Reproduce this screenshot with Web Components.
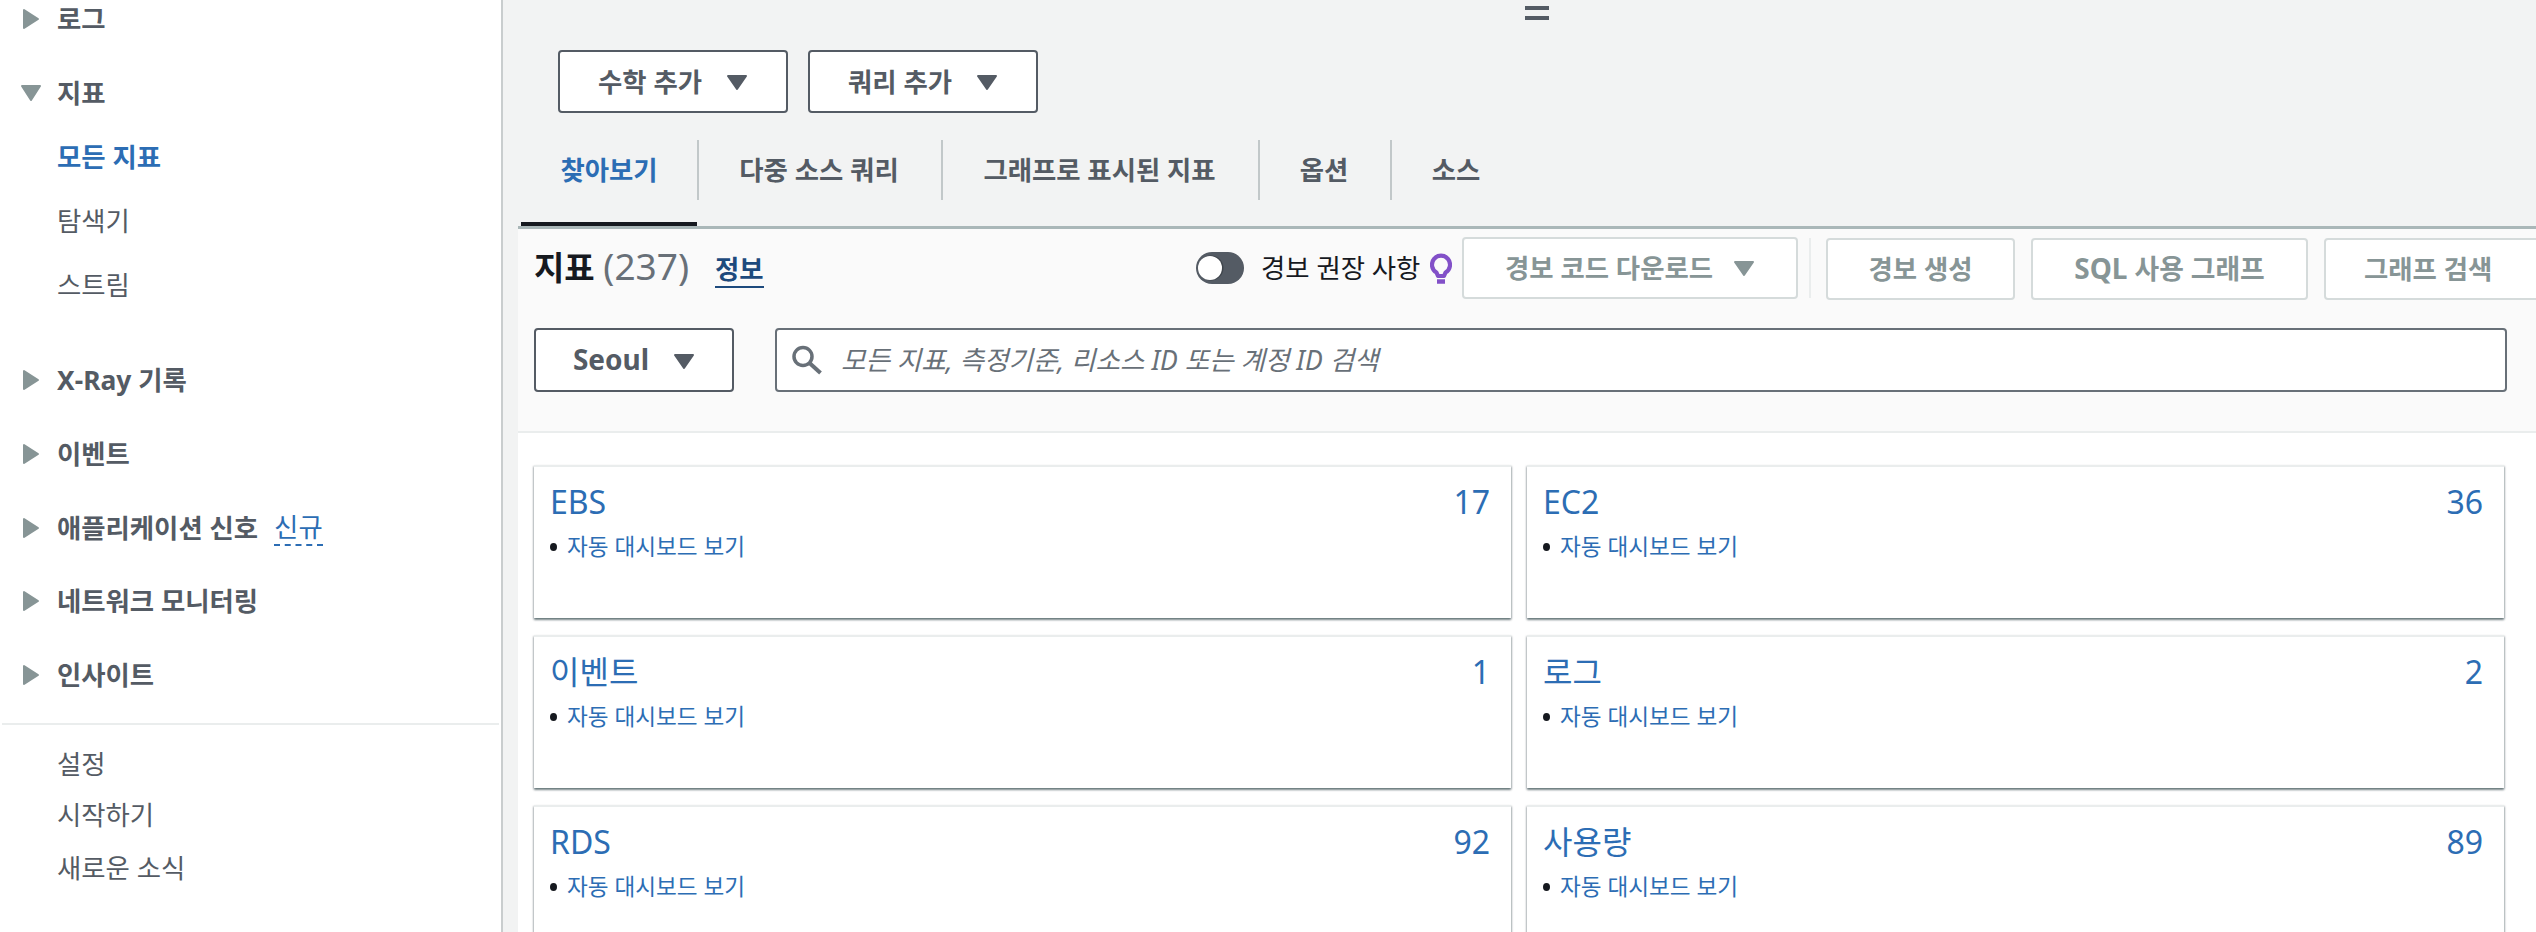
<!DOCTYPE html>
<html lang="ko">
<head>
<meta charset="UTF-8">
<title>CloudWatch 지표</title>
<style>
  html, body { margin: 0; height: 932px; overflow: hidden; }
  body {
    font-family: "Noto Sans", "Noto Sans CJK KR", sans-serif;
    color: #16191f;
    background: #f2f3f3;
  }
  #page { display: flex; height: 932px; width: 2536px; overflow: hidden; }
</style>
</head>
<body>
<div id="page">
  <side-nav>
    <nav-group style="--top:2px">로그</nav-group>
    <nav-group open style="--top:40px">지표</nav-group>
    <nav-link active style="--top:30px">모든 지표</nav-link>
    <nav-link style="--top:30px">탐색기</nav-link>
    <nav-link style="--top:30px">스트림</nav-link>
    <nav-group style="--top:61px">X-Ray 기록</nav-group>
    <nav-group style="--top:40px">이벤트</nav-group>
    <nav-group style="--top:40px" badge="신규">애플리케이션 신호</nav-group>
    <nav-group style="--top:39px">네트워크 모니터링</nav-group>
    <nav-group style="--top:40px">인사이트</nav-group>
    <nav-rule></nav-rule>
    <nav-link style="--top:0px">설정</nav-link>
    <nav-link style="--top:17px">시작하기</nav-link>
    <nav-link style="--top:19px">새로운 소식</nav-link>
  </side-nav>
  <metrics-view>
    <split-handle></split-handle>
    <div slot="actions" style="display:flex;gap:20px">
      <drop-button>수학 추가</drop-button>
      <drop-button>쿼리 추가</drop-button>
    </div>
    <tab-bar slot="tabs"></tab-bar>
    <metrics-panel slot="panel"></metrics-panel>
  </metrics-view>
</div>

<script>
  const CARET = '<svg width="22" height="17" viewBox="0 0 22 17"><path d="M2 2h18L11 15z" fill="currentColor" stroke="currentColor" stroke-width="2" stroke-linejoin="round"/></svg>'

  class SideNav extends HTMLElement {
    constructor() {
      super()
      const shadow = this.attachShadow({mode: 'open'})
      shadow.innerHTML = `
        <style>
          :host { display: block; box-sizing: border-box; width: 503px; height: 932px; flex: none;
            background: #fff; border-right: 2px solid #c9cdce; font-size: 26.4px; color: #545b64; }
        </style>
        <slot></slot>`
    }
  }

  class NavGroup extends HTMLElement {
    constructor() {
      super()
      const shadow = this.attachShadow({mode: 'open'})
      const open = this.hasAttribute('open')
      const badge = this.getAttribute('badge')
      const icon = open
        ? '<svg style="margin-left:-2px" width="22" height="18" viewBox="0 0 22 18"><path d="M2 2h18L11 16z" fill="#879596" stroke="#879596" stroke-width="2" stroke-linejoin="round"/></svg>'
        : '<svg width="18" height="22" viewBox="0 0 18 22"><path d="M2 2v18l14-9z" fill="#879596" stroke="#879596" stroke-width="2" stroke-linejoin="round"/></svg>'
      shadow.innerHTML = `
        <style>
          :host { display: flex; align-items: center; height: 34px; margin-top: var(--top, 0); padding-left: 22px;
            font-size: 26.4px; font-weight: 700; color: #545b64; white-space: nowrap; }
          .icon { width: 35px; flex: none; display: flex; }
          .label { margin-top: -3px; }
          .badge { margin-left: 16px; font-weight: 400; color: #2c6db4; border-bottom: 2px dashed #2c6db4; line-height: 34px; height: 34px; }
        </style>
        <span class="icon">${icon}</span><span class="label"><slot></slot></span>${badge ? `<span class="badge">${badge}</span>` : ''}`
    }
  }

  class NavLink extends HTMLElement {
    constructor() {
      super()
      const shadow = this.attachShadow({mode: 'open'})
      shadow.innerHTML = `
        <style>
          :host { display: block; height: 34px; line-height: 34px; margin-top: var(--top, 0); padding-left: 57px;
            font-size: 26.4px; color: #545b64; }
          :host([active]) { color: #2c6db4; font-weight: 700; }
        </style>
        <slot></slot>`
    }
  }

  class NavRule extends HTMLElement {
    constructor() {
      super()
      const shadow = this.attachShadow({mode: 'open'})
      shadow.innerHTML = `
        <style>
          :host { display: block; height: 2px; margin: 31px 2px 22px; background: #eaeded; }
        </style>`
    }
  }

  class MetricsView extends HTMLElement {
    constructor() {
      super()
      const shadow = this.attachShadow({mode: 'open'})
      shadow.innerHTML = `
        <style>
          :host { display: block; flex: 1; min-width: 0; position: relative; background: #f2f3f3; }
          .handle { position: absolute; left: 1022px; top: 0; }
          .actions { padding: 50px 0 0 55px; }
          .tabs { margin: 26px 0 0 15px; }
        </style>
        <div class="handle"><slot></slot></div>
        <div class="actions"><slot name="actions"></slot></div>
        <div class="tabs"><slot name="tabs"></slot></div>
        <slot name="panel"></slot>`
    }
  }

  class SplitHandle extends HTMLElement {
    constructor() {
      super()
      const shadow = this.attachShadow({mode: 'open'})
      shadow.innerHTML = `
        <style>
          :host { display: block; width: 24px; height: 22px; }
          i { display: block; height: 4px; background: #545b64; margin-top: 6px; }
          i:first-child { margin-top: 8px; }
        </style>
        <i></i><i></i>`
    }
  }

  class DropButton extends HTMLElement {
    constructor() {
      super()
      const shadow = this.attachShadow({mode: 'open'})
      shadow.innerHTML = `
        <style>
          :host { display: inline-flex; box-sizing: border-box; align-items: center; justify-content: center; gap: 24px;
            width: var(--w, 230px); height: var(--h, 63px); padding-bottom: 3px; border: 2px solid #545b64; border-radius: 4px; background: #fff;
            font-size: var(--fs, 26.4px); font-weight: 700; color: #545b64; white-space: nowrap; }
          svg { display: block; margin-top: 5px; }
        </style>
        <slot></slot>${CARET}`
    }
  }

  class TabBar extends HTMLElement {
    constructor() {
      super()
      const shadow = this.attachShadow({mode: 'open'})
      const tabs = ['찾아보기', '다중 소스 쿼리', '그래프로 표시된 지표', '옵션', '소스']
      const widths = [176, 244, 317, 132, 132]
      shadow.innerHTML = `
        <style>
          :host { display: flex; height: 87px; padding-left: 3px; border-bottom: 3px solid #aab7b8; }
          .tab { position: relative; display: flex; align-items: center; justify-content: center; box-sizing: border-box;
            height: 87px; padding-bottom: 28px; font-size: 26.4px; font-weight: 700; color: #545b64; white-space: nowrap; }
          .tab + .tab::before { content: ""; position: absolute; left: 0; top: 1px; width: 2px; height: 60px; background: #c2c8c9; }
          .tab.on { color: #2c6db4; }
          .tab.on::after { content: ""; position: absolute; left: 0; right: 0; bottom: 0; height: 4px; background: #16191f; }
        </style>
        ${tabs.map((t, i) => `<div class="tab${i === 0 ? ' on' : ''}" style="width:${widths[i]}px">${t}</div>`).join('')}`
    }
  }

  class MetricsPanel extends HTMLElement {
    constructor() {
      super()
      const shadow = this.attachShadow({mode: 'open'})
      const cards = [['EBS', 17], ['EC2', 36], ['이벤트', 1], ['로그', 2], ['RDS', 92], ['사용량', 89]]
      shadow.innerHTML = `
        <style>
          :host { display: block; margin-left: 15px; background: #fff; height: 703px; overflow: hidden; }
          .head { box-sizing: border-box; height: 204px; background: #fafafa; border-bottom: 2px solid #eaeded; padding: 7px 0 0 16px; }
          .top { display: flex; align-items: center; height: 64px; width: 2100px; }
          .title { display: flex; align-items: center; width: 662px; flex: none; }
          h1 { margin: -3px 0 0; width: 181px; font-size: 33px; line-height: 44px; font-weight: 700; color: #16191f; white-space: nowrap; }
          h1 span { font-size: 37px; font-weight: 400; color: #687078; }
          .info { font-size: 26.4px; font-weight: 700; color: #1d4a7d; border-bottom: 2px solid #1d4a7d; line-height: 34px; margin-top: 4px; }
          .toggle { width: 48px; height: 32px; flex: none; display: block; }
          .toggle-label { margin: -3px 0 0 17px; width: 160px; flex: none; font-size: 26.4px; white-space: nowrap; }
          .bulb { margin-left: 9px; flex: none; display: block; }
          .btn { box-sizing: border-box; display: flex; align-items: center; justify-content: center; gap: 20px; height: 62px; padding-bottom: 4px; flex: none;
            border: 2px solid #d5dbdb; border-radius: 4px; background: #fff; color: #879596; font-size: 26.4px; font-weight: 700; white-space: nowrap; }
          .btn svg { margin-top: 4px; }
          .low { margin-top: 2px; }
          .sep { width: 2px; height: 60px; background: #eaeded; margin: 0 15px 0 11px; flex: none; }
          .filter { display: flex; gap: 41px; margin-top: 28px; }
          .field { box-sizing: border-box; width: 1732px; height: 64px; display: flex; align-items: center; padding-left: 15px;
            border: 2px solid #687078; border-radius: 4px; background: #fff; }
          .field svg { flex: none; }
          .field span { margin: -3px 0 0 19px; font-size: 26.6px; font-style: italic; color: #687078; white-space: nowrap; }
          drop-button { --w: 200px; --h: 64px; --fs: 28px; }
          .grid { display: grid; grid-template-columns: 977px 977px; column-gap: 16px; row-gap: 17px; padding: 32px 0 0 16px; }
        </style>
        <div class="head">
          <div class="top">
            <div class="title">
              <h1>지표 <span>(237)</span></h1>
              <div class="info">정보</div>
            </div>
            <svg class="toggle" viewBox="0 0 48 32"><rect width="48" height="32" rx="16" fill="#545b64"/><circle cx="15" cy="16" r="12.5" fill="#3f454c"/><circle cx="14" cy="16" r="12" fill="#fff"/></svg>
            <div class="toggle-label">경보 권장 사항</div>
            <svg class="bulb" width="22" height="31" viewBox="0 0 22 31"><path d="M6.500 19.500 A9 9 0 1 1 15.500 19.500 L14 23 H8 Z" fill="none" stroke="#8250c8" stroke-width="4.200" stroke-linejoin="round"/><path d="M7 28.500h8" stroke="#8250c8" stroke-width="4.500"/></svg>
            <div class="btn" style="width:336px;margin-left:10px">경보 코드 다운로드 ${CARET}</div>
            <div class="sep"></div>
            <div class="btn low" style="width:189px">경보 생성</div>
            <div class="btn low" style="width:277px;margin-left:16px;font-size:26.800px"><span><span style="font-size:28px">SQL</span> 사용 그래프</span></div>
            <div class="btn low" style="width:230px;margin-left:16px;justify-content:flex-start;padding-left:38px">그래프 검색</div>
          </div>
          <div class="filter">
            <drop-button>Seoul</drop-button>
            <div class="field">
              <svg width="30" height="30" viewBox="0 0 30 30"><circle cx="11" cy="11.500" r="9" fill="none" stroke="#687078" stroke-width="3.500"/><path d="M17.500 18l11 10" stroke="#687078" stroke-width="4"/></svg>
              <span>모든 지표, 측정기준, 리소스 ID 또는 계정 ID 검색</span>
            </div>
          </div>
        </div>
        <div class="grid">
          ${cards.map(c => `<metric-card name="${c[0]}" count="${c[1]}"></metric-card>`).join('')}
        </div>`
    }
  }

  class MetricCard extends HTMLElement {
    constructor() {
      super()
      const shadow = this.attachShadow({mode: 'open'})
      shadow.innerHTML = `
        <style>
          :host { display: block; box-sizing: border-box; height: 153px; padding: 15px 21px 0 16px; background: #fff;
            border-top: 2px solid #eaeded; box-shadow: 0 2px 2px rgba(0,28,36,.45), 1px 1px 2px rgba(0,28,36,.2), -1px 1px 2px rgba(0,28,36,.15); }
          .row { display: flex; justify-content: space-between; font-size: 32px; line-height: 40px; color: #2c6db4; }
          .link { display: flex; align-items: center; margin-top: 11px; font-size: 22.600px; line-height: 28px; color: #2c6db4; white-space: nowrap; }
          .dot { width: 7px; height: 8px; border-radius: 50%; background: #16191f; margin-right: 10px; flex: none; }
        </style>
        <div class="row"><span>${this.getAttribute('name')}</span><span>${this.getAttribute('count')}</span></div>
        <div class="link"><span class="dot"></span>자동 대시보드 보기</div>`
    }
  }

  customElements.define('side-nav', SideNav)
  customElements.define('nav-group', NavGroup)
  customElements.define('nav-link', NavLink)
  customElements.define('nav-rule', NavRule)
  customElements.define('metrics-view', MetricsView)
  customElements.define('split-handle', SplitHandle)
  customElements.define('drop-button', DropButton)
  customElements.define('tab-bar', TabBar)
  customElements.define('metric-card', MetricCard)
  customElements.define('metrics-panel', MetricsPanel)
</script>
</body>
</html>
